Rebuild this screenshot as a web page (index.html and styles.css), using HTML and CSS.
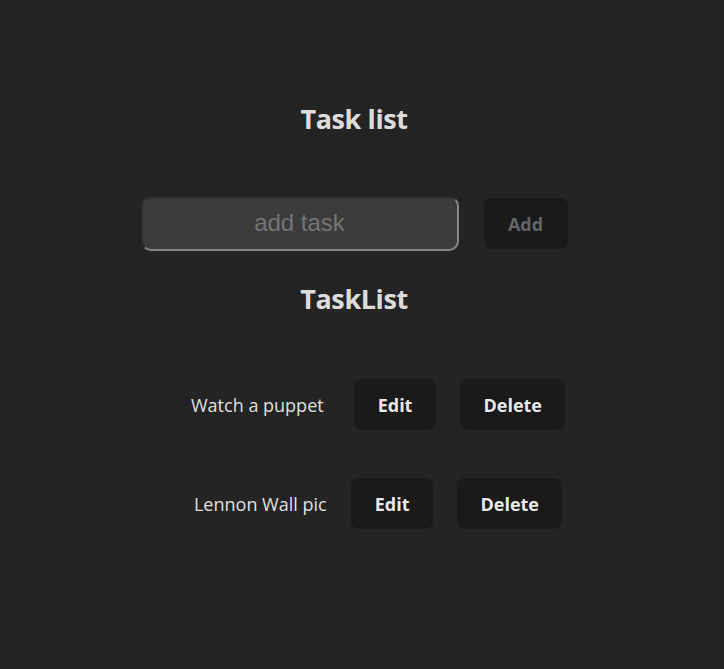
FILE: index.html
```html
<!DOCTYPE html>
<html lang="en">
<head>
<meta charset="UTF-8">
<title>Task list</title>
<link rel="stylesheet" href="styles.css">
</head>
<body>
<div class="app">
  <h1 class="title">Task list</h1>
  <form class="add-form">
    <input class="task-input" type="text" placeholder="add task">
    <button class="btn btn-add" type="button" disabled>Add</button>
  </form>
  <h2 class="title title-list">TaskList</h2>
  <ul class="tasks">
    <li class="task">
      <span class="task-name task-name-wide">Watch a puppet</span>
      <button class="btn btn-edit" type="button">Edit</button>
      <button class="btn" type="button">Delete</button>
    </li>
    <li class="task">
      <span class="task-name">Lennon Wall pic</span>
      <button class="btn btn-edit" type="button">Edit</button>
      <button class="btn" type="button">Delete</button>
    </li>
  </ul>
</div>
</body>
</html>
```

FILE: styles.css
```css
html, body {
  margin: 0;
  padding: 0;
}
body {
  background: #242424;
  color: rgba(255, 255, 255, 0.87);
  font-family: "Open Sans", "Noto Sans", sans-serif;
  min-height: 669px;
}
.app {
  display: flex;
  flex-direction: column;
  align-items: center;
  padding-top: 97px;
  padding-right: 16px;
}
.title {
  margin: 0;
  font-size: 27px;
  font-weight: 700;
  line-height: 44px;
  letter-spacing: -0.4px;
}
.add-form {
  display: flex;
  align-items: center;
  gap: 25px;
  margin-top: 55px;
}
.task-input {
  box-sizing: border-box;
  width: 318px;
  height: 55px;
  margin: 0;
  padding: 0 0 2px;
  border-radius: 10px;
  background: #3b3b3b;
  border-style: solid;
  border-width: 2px;
  border-color: #2c2c2c #868686 #868686 #2c2c2c;
  font-family: "Liberation Sans", Arial, sans-serif;
  font-size: 24px;
  color: #ddd;
  text-align: center;
  outline: none;
}
.task-input::placeholder {
  color: #757575;
}
.btn {
  box-sizing: border-box;
  height: 51px;
  margin: 0;
  padding: 0 22px;
  border: 1px solid transparent;
  border-radius: 8px;
  background: #1a1a1a;
  color: rgba(255, 255, 255, 0.92);
  font-family: "Open Sans", "Noto Sans", sans-serif;
  font-size: 18px;
  font-weight: 700;
  cursor: pointer;
}
.btn-edit {
  padding: 0 23px;
}
.btn-add {
  color: #646464;
  width: 84px;
  padding: 0;
}
.title-list {
  margin-top: 26px;
}
.tasks {
  list-style: none;
  margin: 58px 0 0;
  padding: 0 0 0 48px;
  display: flex;
  flex-direction: column;
  gap: 48px;
}
.task {
  display: flex;
  align-items: center;
  justify-content: center;
  gap: 24px;
}
.task-name {
  font-size: 18px;
}
.task-name-wide {
  margin-right: 6px;
}
```
